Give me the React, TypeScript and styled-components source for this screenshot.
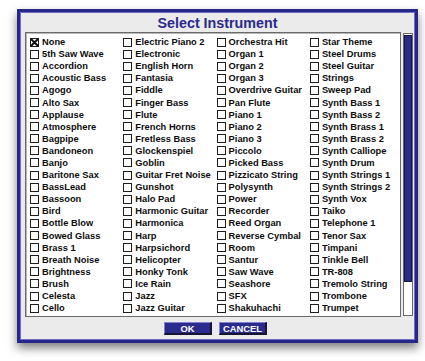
import React from "react";
import styled, { createGlobalStyle } from "styled-components";

const Global = createGlobalStyle`
  html, body { margin: 0; padding: 0; background: #ffffff; }
  body { font-family: "Liberation Sans", Arial, sans-serif; }
  * { box-sizing: border-box; }
`;

const Page = styled.div`
  width: 425px;
  height: 361px;
  padding: 9px 0 0 17px;
`;

const Dialog = styled.div`
  width: 401px;
  height: 334px;
  background: #ebebeb;
  border: 3px solid #27278a;
  box-shadow: inset 1px 1px 0 #6e6ec8, inset -1px -1px 0 #6e6ec8, 0 5px 9px rgba(0, 0, 0, 0.5);
  display: flex;
  flex-direction: column;
`;

const Title = styled.div`
  height: 20px;
  display: flex;
  align-items: center;
  justify-content: center;
  padding-top: 1px;
  color: #2a2a8c;
  font-weight: bold;
  font-size: 14.3px;
`;

const Body = styled.div`
  display: flex;
  height: 285px;
  padding: 0 2px 0 5px;
  gap: 2px;
`;

const ListBox = styled.div`
  width: 376px;
  height: 285px;
  background: #ffffff;
  border: 1px solid #6a6a6a;
  box-shadow: inset 1px 1px 0 #b8b8b8;
  padding: 3px 0 0 4px;
  overflow: hidden;
  display: grid;
  grid-auto-flow: column;
  grid-template-rows: repeat(23, 12.1px);
  grid-template-columns: 93.3px 93.3px 93.3px 93.3px;
`;

const Item = styled.div`
  display: flex;
  align-items: center;
  gap: 3px;
  height: 12.1px;
  white-space: nowrap;
`;

const Box = styled.span`
  flex: none;
  width: 9px;
  height: 9px;
  border: 1px solid #1e1e1e;
  background: #ffffff;
  display: flex;
  align-items: center;
  justify-content: center;
`;

const Label = styled.span`
  font-size: 9.3px;
  font-weight: bold;
  color: #0c0c0c;
  line-height: 12px;
`;

const ScrollTrack = styled.div`
  width: 10px;
  height: 283px;
  margin-top: 1px;
  background: #ffffff;
  border: 1px solid #6a6a6a;
  padding: 1px 0 0 0;
`;

const Thumb = styled.div`
  height: 247px;
  background: #2b2b8c;
  border: 1px solid #141440;
`;

const Buttons = styled.div`
  display: flex;
  justify-content: center;
  gap: 7px;
  margin-top: 5px;
  padding-right: 4px;
`;

const Button = styled.button`
  width: 48px;
  height: 13px;
  padding: 0;
  margin: 0;
  background: #2b2b8e;
  color: #ffffff;
  font-family: "Liberation Sans", Arial, sans-serif;
  font-weight: bold;
  font-size: 9.4px;
  line-height: 11px;
  border-style: solid;
  border-width: 1px 2px 2px 1px;
  border-color: #8080d0 #151530 #151530 #8080d0;
  cursor: pointer;
`;

const columns: string[][] = [
  ["None", "5th Saw Wave", "Accordion", "Acoustic Bass", "Agogo", "Alto Sax", "Applause", "Atmosphere", "Bagpipe", "Bandoneon", "Banjo", "Baritone Sax", "BassLead", "Bassoon", "Bird", "Bottle Blow", "Bowed Glass", "Brass 1", "Breath Noise", "Brightness", "Brush", "Celesta", "Cello"],
  ["Electric Piano 2", "Electronic", "English Horn", "Fantasia", "Fiddle", "Finger Bass", "Flute", "French Horns", "Fretless Bass", "Glockenspiel", "Goblin", "Guitar Fret Noise", "Gunshot", "Halo Pad", "Harmonic Guitar", "Harmonica", "Harp", "Harpsichord", "Helicopter", "Honky Tonk", "Ice Rain", "Jazz", "Jazz Guitar"],
  ["Orchestra Hit", "Organ 1", "Organ 2", "Organ 3", "Overdrive Guitar", "Pan Flute", "Piano 1", "Piano 2", "Piano 3", "Piccolo", "Picked Bass", "Pizzicato String", "Polysynth", "Power", "Recorder", "Reed Organ", "Reverse Cymbal", "Room", "Santur", "Saw Wave", "Seashore", "SFX", "Shakuhachi"],
  ["Star Theme", "Steel Drums", "Steel Guitar", "Strings", "Sweep Pad", "Synth Bass 1", "Synth Bass 2", "Synth Brass 1", "Synth Brass 2", "Synth Calliope", "Synth Drum", "Synth Strings 1", "Synth Strings 2", "Synth Vox", "Taiko", "Telephone 1", "Tenor Sax", "Timpani", "Tinkle Bell", "TR-808", "Tremolo String", "Trombone", "Trumpet"],
];

const Check = () => (
  <svg width="7" height="7" viewBox="0 0 7 7">
    <path d="M0.5 0.5 L6.5 6.5 M6.5 0.5 L0.5 6.5" stroke="#111" strokeWidth="2" strokeLinecap="square" />
  </svg>
);

export default function App() {
  const items = columns.flat();
  return (
    <Page>
      <Global />
      <Dialog>
        <Title>Select Instrument</Title>
        <Body>
          <ListBox>
            {items.map((name) => (
              <Item key={name}>
                <Box>{name === "None" ? <Check /> : null}</Box>
                <Label>{name}</Label>
              </Item>
            ))}
          </ListBox>
          <ScrollTrack>
            <Thumb />
          </ScrollTrack>
        </Body>
        <Buttons>
          <Button>OK</Button>
          <Button>CANCEL</Button>
        </Buttons>
      </Dialog>
    </Page>
  );
}
